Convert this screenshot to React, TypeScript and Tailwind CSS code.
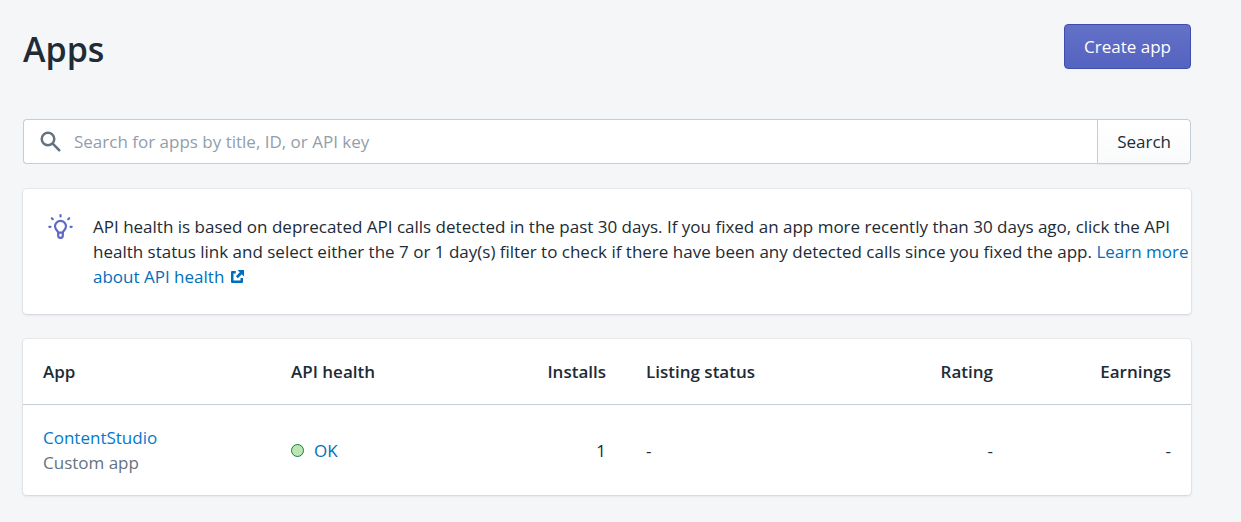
import React from "react";

type AppRow = {
  title: string;
  kind: string;
  health: string;
  installs: number;
  listingStatus?: string;
  rating?: string;
  earnings?: string;
};

const apps: AppRow[] = [
  { title: "ContentStudio", kind: "Custom app", health: "OK", installs: 1 },
];

const SearchIcon = () => (
  <svg viewBox="0 0 20 20" className="w-[25px] h-[25px] shrink-0 fill-[#637381]" aria-hidden="true">
    <path d="M8 12a4 4 0 1 1 0-8 4 4 0 0 1 0 8m9.707 4.293l-4.82-4.82A5.968 5.968 0 0 0 14 8 6 6 0 1 0 2 8a6 6 0 0 0 6 6 5.968 5.968 0 0 0 3.473-1.113l4.82 4.82a.997.997 0 0 0 1.414 0 1 1 0 0 0 0-1.414" />
  </svg>
);

const BulbIcon = () => (
  <svg
    viewBox="0 0 25 25"
    className="w-[25px] h-[25px] shrink-0"
    fill="none"
    stroke="#5c6ac4"
    strokeWidth="2.2"
    strokeLinecap="round"
    strokeLinejoin="round"
    aria-hidden="true"
  >
    <path d="M12.5 1.200v1.200M3.800 4.200l1 1M21.200 4.200l-1 1M1.300 12.800h1.200M22.500 12.800h1.200" />
    <path d="M10.200 18.600c0-1.800-3.200-2.900-3.200-6.300a5.500 5.500 0 0 1 11 0c0 3.400-3.200 4.500-3.200 6.300z" />
    <path d="M10.200 18.600v3.200a2 2 0 0 0 2 2h.6a2 2 0 0 0 2-2v-3.200" />
  </svg>
);

const ExternalIcon = () => (
  <svg viewBox="0 0 13 13" className="ml-0.5 inline-block w-[13px] h-[13px] align-baseline fill-[#006fbb]" aria-hidden="true">
    <path d="M1 1h3.800v2.500H2.500v7h7V8H12v4a1 1 0 0 1-1 1H1a1 1 0 0 1-1-1V2a1 1 0 0 1 1-1z" />
    <path d="M6.500 0H13v6.500l-2.200-2.200L6.800 8.200 4.900 6.300l3.900-4z" />
  </svg>
);

const App: React.FC = () => {
  return (
    <main className="min-h-screen bg-[#f4f6f8] pl-[23px] pr-[50px] pt-6 pb-[27px] font-['Open_Sans','Noto_Sans',sans-serif] text-[17px] leading-[25px] text-[#212b36]">
      <header className="flex items-start justify-between">
        <h1 className="text-[34px] leading-[50px] font-semibold">Apps</h1>
        <button
          type="button"
          className="h-[45px] px-[19px] rounded-[4px] border border-[#3f4eae] bg-linear-to-b from-[#6371c7] to-[#5563c1] text-white"
        >
          Create app
        </button>
      </header>

      <form className="mt-[45px] flex" onSubmit={(e) => e.preventDefault()}>
        <label className="flex h-[45px] flex-1 items-center gap-[11px] rounded-l-[4px] border border-r-0 border-[#c4cdd5] bg-white pl-[14px]">
          <SearchIcon />
          <input
            type="text"
            aria-label="Search for apps"
            placeholder="Search for apps by title, ID, or API key"
            className="min-w-0 flex-1 bg-transparent outline-none placeholder:text-[#919eab]"
          />
        </label>
        <button
          type="submit"
          className="h-[45px] px-[19px] rounded-r-[4px] border border-[#c4cdd5] bg-linear-to-b from-white to-[#f9fafb] shadow-[0_1px_0_rgba(22,29,37,0.05)]"
        >
          Search
        </button>
      </form>

      <section className="mt-[25px] flex gap-5 rounded-[4px] bg-white py-[25px] pl-[25px] shadow-[0_0_0_1px_rgba(63,63,68,0.05),0_1px_3px_0_rgba(63,63,68,0.15)]">
        <BulbIcon />
        <p>
          API health is based on deprecated API calls detected in the past 30 days. If you fixed an app more recently
          than 30 days ago, click the API health status link and select either the 7 or 1 day(s) filter to check if
          there have been any detected calls since you fixed the app.{" "}
          <a href="#api-health" className="text-[#006fbb]">
            Learn more about API health <ExternalIcon />
          </a>
        </p>
      </section>

      <section className="mt-[25px] overflow-hidden rounded-[4px] bg-white shadow-[0_0_0_1px_rgba(63,63,68,0.05),0_1px_3px_0_rgba(63,63,68,0.15)]">
        <table className="w-full table-fixed text-left">
          <colgroup>
            <col className="w-[248px]" />
            <col className="w-[205px]" />
            <col className="w-[150px]" />
            <col className="w-[232px]" />
            <col className="w-[155px]" />
            <col className="w-[178px]" />
          </colgroup>
          <thead>
            <tr className="border-b border-[#c4cdd5]">
              <th className="p-5 font-semibold">App</th>
              <th className="p-5 font-semibold">API health</th>
              <th className="p-5 font-semibold text-right">Installs</th>
              <th className="p-5 font-semibold">Listing status</th>
              <th className="p-5 font-semibold text-right">Rating</th>
              <th className="p-5 font-semibold text-right">Earnings</th>
            </tr>
          </thead>
          <tbody>
            {apps.map((app) => (
              <tr key={app.title}>
                <td className="p-5">
                  <a href="#app" className="text-[#007ace]">
                    {app.title}
                  </a>
                  <div className="text-[#637381]">{app.kind}</div>
                </td>
                <td className="p-5">
                  <div className="flex items-center gap-[10px]">
                    <span className="w-[13px] h-[13px] rounded-full border border-[#108043] bg-[#bbe5b3]"></span>
                    <a href="#health" className="text-[#006fbb]">
                      {app.health}
                    </a>
                  </div>
                </td>
                <td className="p-5 text-right">{app.installs}</td>
                <td className="p-5">{app.listingStatus ?? "-"}</td>
                <td className="p-5 text-right">{app.rating ?? "-"}</td>
                <td className="p-5 text-right">{app.earnings ?? "-"}</td>
              </tr>
            ))}
          </tbody>
        </table>
      </section>
    </main>
  );
};

export default App;
